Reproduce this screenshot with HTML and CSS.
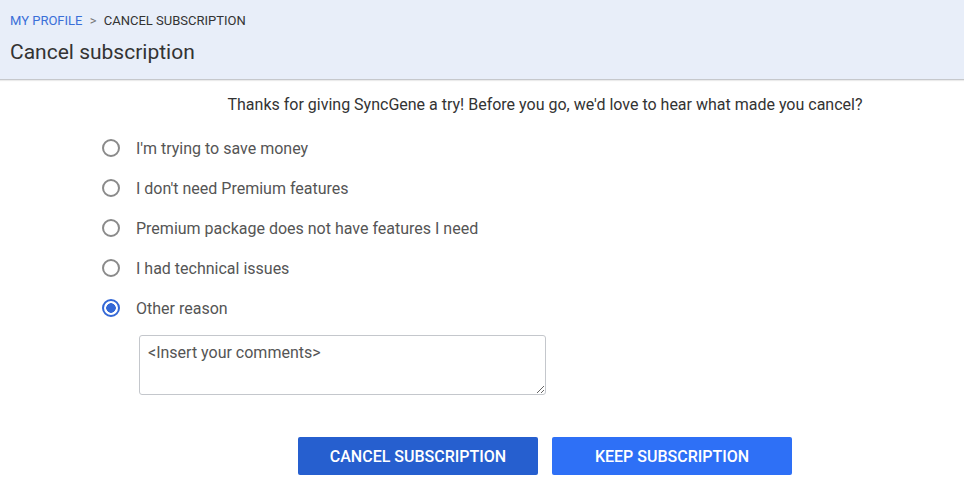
FILE: index.html
```html
<!DOCTYPE html>
<html lang="en">
<head>
    <meta charset="UTF-8">
    <meta name="viewport" content="width=device-width, initial-scale=1.0">
    <title>Cancel subscription</title>
    <link rel="stylesheet" href="styles.css">
</head>
<body>
    <!-- Header -->
    <div class="page-header">
        <div class="breadcrumb">
            <a href="#" class="crumb-link">MY PROFILE</a>
            <span class="crumb-sep">&gt;</span>
            <span class="crumb-current">CANCEL SUBSCRIPTION</span>
        </div>
        <h1 class="page-title">Cancel subscription</h1>
    </div>

    <div class="content">
        <p class="intro">Thanks for giving SyncGene a try! Before you go, we'd love to hear what made you cancel?</p>

        <!-- Reasons -->
        <div class="reasons">
            <label class="reason"><input type="radio" name="reason"> I'm trying to save money</label>
            <label class="reason"><input type="radio" name="reason"> I don't need Premium features</label>
            <label class="reason"><input type="radio" name="reason"> Premium package does not have features I need</label>
            <label class="reason"><input type="radio" name="reason"> I had technical issues</label>
            <label class="reason"><input type="radio" name="reason" checked> Other reason</label>
            <textarea class="comments">&lt;Insert your comments&gt;</textarea>
        </div>

        <!-- Buttons -->
        <div class="actions">
            <button class="btn btn-cancel">CANCEL SUBSCRIPTION</button>
            <button class="btn btn-keep">KEEP SUBSCRIPTION</button>
        </div>
    </div>
</body>
</html>
```

FILE: styles.css
```css
body {
    font-family: 'Roboto', 'Liberation Sans', sans-serif;
    background-color: #fff;
    margin: 0;
    padding: 0;
    color: #333;
}
.page-header {
    background-color: #e8eef9;
    border-bottom: 1px solid #c6c8cc;
    height: 80px;
    padding: 0 10px;
    box-sizing: border-box;
    box-shadow: 0 1px 1px rgba(0, 0, 0, 0.08);
}
.breadcrumb {
    padding-top: 13px;
    font-size: 13px;
    line-height: 16px;
}
.crumb-link {
    color: #3a6fd8;
    text-decoration: none;
}
.crumb-sep {
    color: #777;
    margin: 0 4px;
}
.crumb-current {
    color: #333;
}
.page-title {
    margin: 10px 0 0;
    font-size: 21px;
    font-weight: 400;
    line-height: 26px;
    color: #333;
}
.intro {
    margin: 15px 0 13px;
    padding-left: 126px;
    text-align: center;
    font-size: 16px;
    line-height: 20px;
    color: #333;
}
.reasons {
    padding-left: 102px;
}
.reason {
    display: flex;
    align-items: center;
    height: 40px;
    font-size: 16px;
    color: #555;
    cursor: pointer;
}
.reason input {
    appearance: none;
    -webkit-appearance: none;
    width: 18px;
    height: 18px;
    margin: 0 16px 0 0;
    border: 2px solid #8a8a8a;
    border-radius: 50%;
    box-sizing: border-box;
    flex-shrink: 0;
}
.reason input:checked {
    border-color: #3468d6;
    background: radial-gradient(circle, #3468d6 0 4.5px, #fff 5px);
}
.comments {
    display: block;
    margin: 7px 0 0 37px;
    width: 407px;
    height: 60px;
    box-sizing: border-box;
    padding: 7px 8px;
    border: 1px solid #c4c7cc;
    border-radius: 3px;
    font-family: 'Roboto', 'Liberation Sans', sans-serif;
    font-size: 16px;
    color: #555;
}
.actions {
    display: flex;
    justify-content: center;
    gap: 14px;
    padding-left: 126px;
    margin-top: 42px;
}
.btn {
    width: 240px;
    height: 38px;
    border: none;
    border-radius: 2px;
    color: #fff;
    font-family: 'Roboto', 'Liberation Sans', sans-serif;
    font-size: 16px;
    font-weight: 500;
    cursor: pointer;
}
.btn-cancel {
    background-color: #265fcf;
}
.btn-keep {
    background-color: #2e70f6;
}
```
